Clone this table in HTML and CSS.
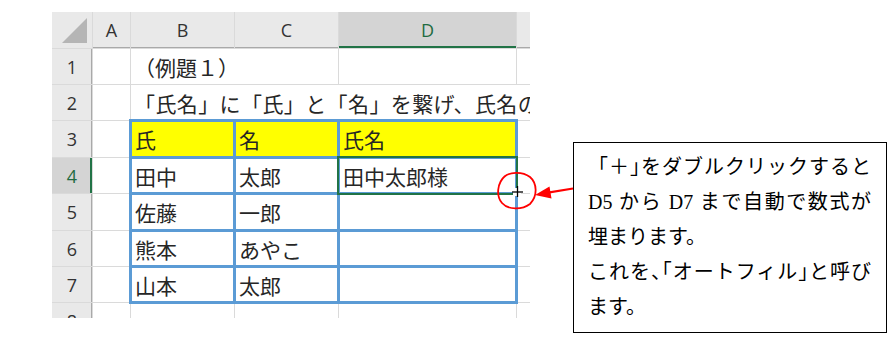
FILE: index.html
```html
<!DOCTYPE html>
<html lang="ja">
<head>
<meta charset="utf-8">
<title>オートフィル</title>
<link rel="stylesheet" href="styles.css">
</head>
<body>
<div class="page">
  <div class="sheet">
    <!-- column headers -->
    <div class="hd corner">
      <svg class="corner-tri" width="40" height="36" viewBox="0 0 40 36"><polygon points="10,31 35,31 35,6" fill="#b5b5b5"/></svg>
    </div>
    <div class="hd col-hd">A</div>
    <div class="hd col-hd">B</div>
    <div class="hd col-hd">C</div>
    <div class="hd col-hd on">D</div>
    <div class="hd col-hd"></div>

    <!-- row 1 -->
    <div class="hd row-hd">1</div>
    <div class="cell"></div>
    <div class="cell span-bc">（例題１）</div>
    <div class="cell"></div>
    <div class="cell"></div>

    <!-- row 2 -->
    <div class="hd row-hd">2</div>
    <div class="cell"></div>
    <div class="cell spill">「氏名」に「氏」と「名」を繋げ、氏名の列を作ります。</div>

    <!-- rows 3-7: the bordered list B3:D7 -->
    <div class="range">
      <div class="rc head">氏</div>
      <div class="rc head">名</div>
      <div class="rc head">氏名</div>
      <div class="rc">田中</div>
      <div class="rc">太郎</div>
      <div class="rc active">田中太郎様<span class="selbox"></span></div>
      <div class="rc">佐藤</div>
      <div class="rc">一郎</div>
      <div class="rc"></div>
      <div class="rc">熊本</div>
      <div class="rc">あやこ</div>
      <div class="rc"></div>
      <div class="rc">山本</div>
      <div class="rc">太郎</div>
      <div class="rc"></div>
    </div>

    <div class="hd row-hd">3</div><div class="cell"></div><div class="cell"></div>
    <div class="hd row-hd on">4</div><div class="cell"></div><div class="cell"></div>
    <div class="hd row-hd">5</div><div class="cell"></div><div class="cell"></div>
    <div class="hd row-hd">6</div><div class="cell"></div><div class="cell"></div>
    <div class="hd row-hd">7</div><div class="cell"></div><div class="cell"></div>

    <!-- row 8 (cut off) -->
    <div class="hd row-hd cut">8</div>
    <div class="cell"></div><div class="cell"></div><div class="cell"></div><div class="cell"></div><div class="cell"></div>
  </div>
</div>

<!-- fill-handle cursor, red circle and arrow -->
<svg class="marks" width="90" height="55" viewBox="0 0 90 55">
  <rect x="23" y="23" width="8" height="8" fill="#fff"/>
  <line x1="22" y1="27" x2="33" y2="27" stroke="#000" stroke-width="1.3"/>
  <line x1="27.5" y1="21" x2="27.5" y2="32" stroke="#000" stroke-width="1.3"/>
  <path d="M 14 12 C 19 7, 32 6, 40 12 C 47 18, 48 31, 40 39 C 32 45, 18 45, 12 38 C 6 31, 7 18, 15 11" fill="none" stroke="#f00" stroke-width="1.8"/>
  <line x1="83" y1="23.5" x2="58" y2="27.7" stroke="#f00" stroke-width="2.2"/>
  <polygon points="45,30 59.5,21.5 61.5,33.5" fill="#f00"/>
</svg>

<div class="note">
  <div class="ln j">「＋<span class="h">」</span>をダブルクリックすると</div>
  <div class="ln j">D5 から D7 まで自動で数式が</div>
  <div class="ln">埋まります。</div>
  <div class="ln j">これを<span class="h">、「</span>オートフィル<span class="h">」</span>と呼び</div>
  <div class="ln">ます。</div>
</div>
</body>
</html>
```

FILE: styles.css
```css
body {
  margin: 0;
  width: 890px;
  height: 353px;
  position: relative;
  overflow: hidden;
  background: #fff;
  font-family: "Noto Sans CJK JP", sans-serif;
}

.page {
  padding: 12px 0 0 52px;
}

/* worksheet grid: the 1px gaps show through as gridlines */
.sheet {
  display: grid;
  grid-template-columns: 40px 37px 103px 103px 177px 13px;
  grid-template-rows: 36px 35px 35px 36px 35px 36px 35px 35px 15px;
  gap: 1px;
  width: 478px;
  height: 306px;
  background: #dadada;
  overflow: hidden;
}

.hd {
  background: #e9e9e9;
  display: flex;
  align-items: center;
  justify-content: center;
  font-family: "Open Sans", "Noto Sans", sans-serif;
  font-size: 18px;
  color: #333;
}

.col-hd {
  box-shadow: inset 0 -1px #a9a9a9;
}

.row-hd {
  box-shadow: inset -1px 0 #a9a9a9;
}

.hd.on {
  background: #d4d4d4;
  color: #1f6b41;
}

.col-hd.on {
  box-shadow: inset 0 -2px #217346;
}

.row-hd.on {
  box-shadow: inset -2px 0 #217346;
}

.corner {
  position: relative;
}

.corner-tri {
  display: block;
}

.row-hd.cut {
  align-items: flex-start;
  padding-top: 6px;
  overflow: hidden;
  box-sizing: border-box;
}

.cell {
  background: #fff;
  display: flex;
  align-items: center;
  padding-left: 3px;
  font-size: 21px;
  color: #262626;
  white-space: nowrap;
  overflow: hidden;
}

.span-bc {
  grid-column: span 2;
}

.spill {
  grid-column: 3 / 7;
  letter-spacing: 0.4px;
}

/* B3:D7 list with thick blue borders */
.range {
  grid-column: 3 / 6;
  grid-row: 4 / 9;
  margin: -2px;
  position: relative;
  z-index: 1;
  display: grid;
  grid-template-columns: 101px 101px 175px;
  grid-template-rows: 34px 33px 34px 33px 33px;
  gap: 3px;
  padding: 3px;
  background: #5b9bd5;
}

.rc {
  background: #fff;
  display: flex;
  align-items: center;
  padding-left: 3px;
  font-size: 21px;
  color: #262626;
  white-space: nowrap;
}

.rc.head {
  background: #ffff00;
}

.rc.active {
  position: relative;
}

.selbox {
  position: absolute;
  left: -3px;
  top: -3px;
  right: -3px;
  bottom: -3px;
  border: 2px solid #217346;
}

.marks {
  position: absolute;
  left: 490px;
  top: 165px;
  z-index: 3;
  overflow: visible;
}

/* callout box */
.note {
  position: absolute;
  left: 573px;
  top: 142px;
  z-index: 2;
  width: 314px;
  height: 191px;
  box-sizing: border-box;
  border: 1.5px solid #000;
  padding: 7px 15px 0 14px;
  font-family: "Liberation Serif", "Noto Sans CJK JP", serif;
  font-size: 20px;
  line-height: 35px;
  color: #000;
  background: #fff;
}

.ln {
  white-space: nowrap;
}

.ln.j {
  text-align: justify;
  text-align-last: justify;
}

.h {
  font-feature-settings: "halt";
}
```
